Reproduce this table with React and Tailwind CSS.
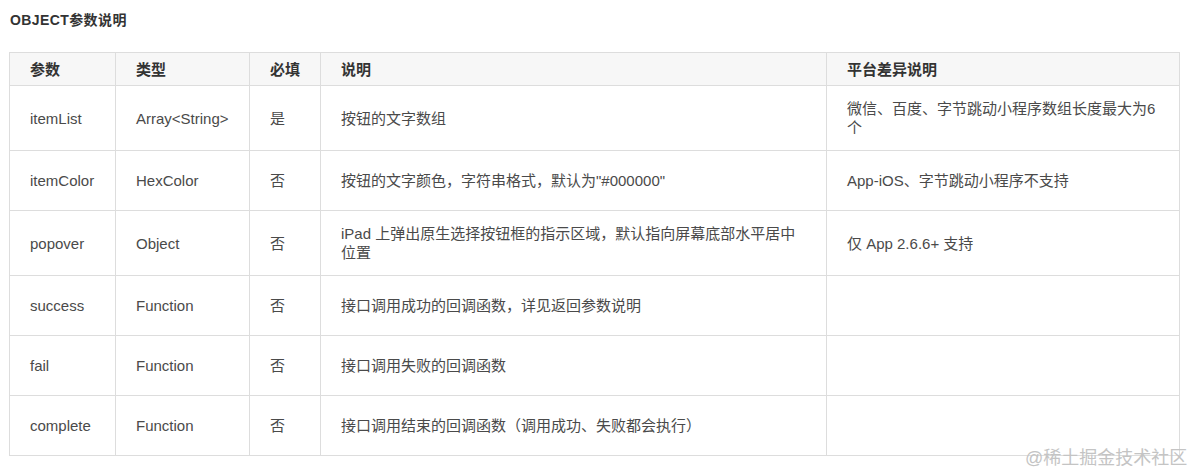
const rows = [
  {
    name: 'itemList',
    type: 'Array<String>',
    required: '是',
    desc: '按钮的文字数组',
    diff: '微信、百度、字节跳动小程序数组长度最大为6个',
    h: 'h-[65px]',
  },
  {
    name: 'itemColor',
    type: 'HexColor',
    required: '否',
    desc: '按钮的文字颜色，字符串格式，默认为"#000000"',
    diff: 'App-iOS、字节跳动小程序不支持',
    h: 'h-[60px]',
  },
  {
    name: 'popover',
    type: 'Object',
    required: '否',
    desc: 'iPad 上弹出原生选择按钮框的指示区域，默认指向屏幕底部水平居中位置',
    diff: '仅 App 2.6.6+ 支持',
    h: 'h-[65px]',
  },
  {
    name: 'success',
    type: 'Function',
    required: '否',
    desc: '接口调用成功的回调函数，详见返回参数说明',
    diff: '',
    h: 'h-[60px]',
  },
  {
    name: 'fail',
    type: 'Function',
    required: '否',
    desc: '接口调用失败的回调函数',
    diff: '',
    h: 'h-[60px]',
  },
  {
    name: 'complete',
    type: 'Function',
    required: '否',
    desc: '接口调用结束的回调函数（调用成功、失败都会执行）',
    diff: '',
    h: 'h-[60px]',
  },
];

const headers = ['参数', '类型', '必填', '说明', '平台差异说明'];

const App = () => {
  return (
    <div
      className="relative h-[476px] w-[1191px] overflow-hidden bg-white pt-[10px] pl-[10px]"
      style={{ fontFamily: '"Liberation Sans", "Noto Sans CJK SC", sans-serif' }}
    >
      <h2 className="text-[14px] leading-[20px] font-bold tracking-[0.4px] text-[#333]">
        OBJECT参数说明
      </h2>
      <table className="mt-[22px] -ml-px w-[1170px] table-fixed border-collapse text-[15px] leading-[19px] text-[#4a4a4a]">
        <colgroup>
          <col className="w-[106px]" />
          <col className="w-[134px]" />
          <col className="w-[71px]" />
          <col className="w-[506px]" />
          <col className="w-[353px]" />
        </colgroup>
        <thead>
          <tr className="h-[33px] bg-[#f7f7f7]">
            {headers.map((h) => (
              <th
                key={h}
                className="border border-[#ddd] px-5 text-left align-middle font-bold text-[#333]"
              >
                {h}
              </th>
            ))}
          </tr>
        </thead>
        <tbody>
          {rows.map((r) => (
            <tr key={r.name} className={r.h}>
              <td className="border border-[#ddd] px-5 align-middle">{r.name}</td>
              <td className="border border-[#ddd] px-5 align-middle">{r.type}</td>
              <td className="border border-[#ddd] px-5 align-middle">{r.required}</td>
              <td className="border border-[#ddd] px-5 align-middle">{r.desc}</td>
              <td className="border border-[#ddd] px-5 align-middle">{r.diff}</td>
            </tr>
          ))}
        </tbody>
      </table>
      {/* watermark */}
      <div className="absolute top-[446px] left-[1025px] text-[18px] leading-[24px] whitespace-nowrap text-[#c4c4c4]">
        @稀土掘金技术社区
      </div>
    </div>
  );
};

export default App;
